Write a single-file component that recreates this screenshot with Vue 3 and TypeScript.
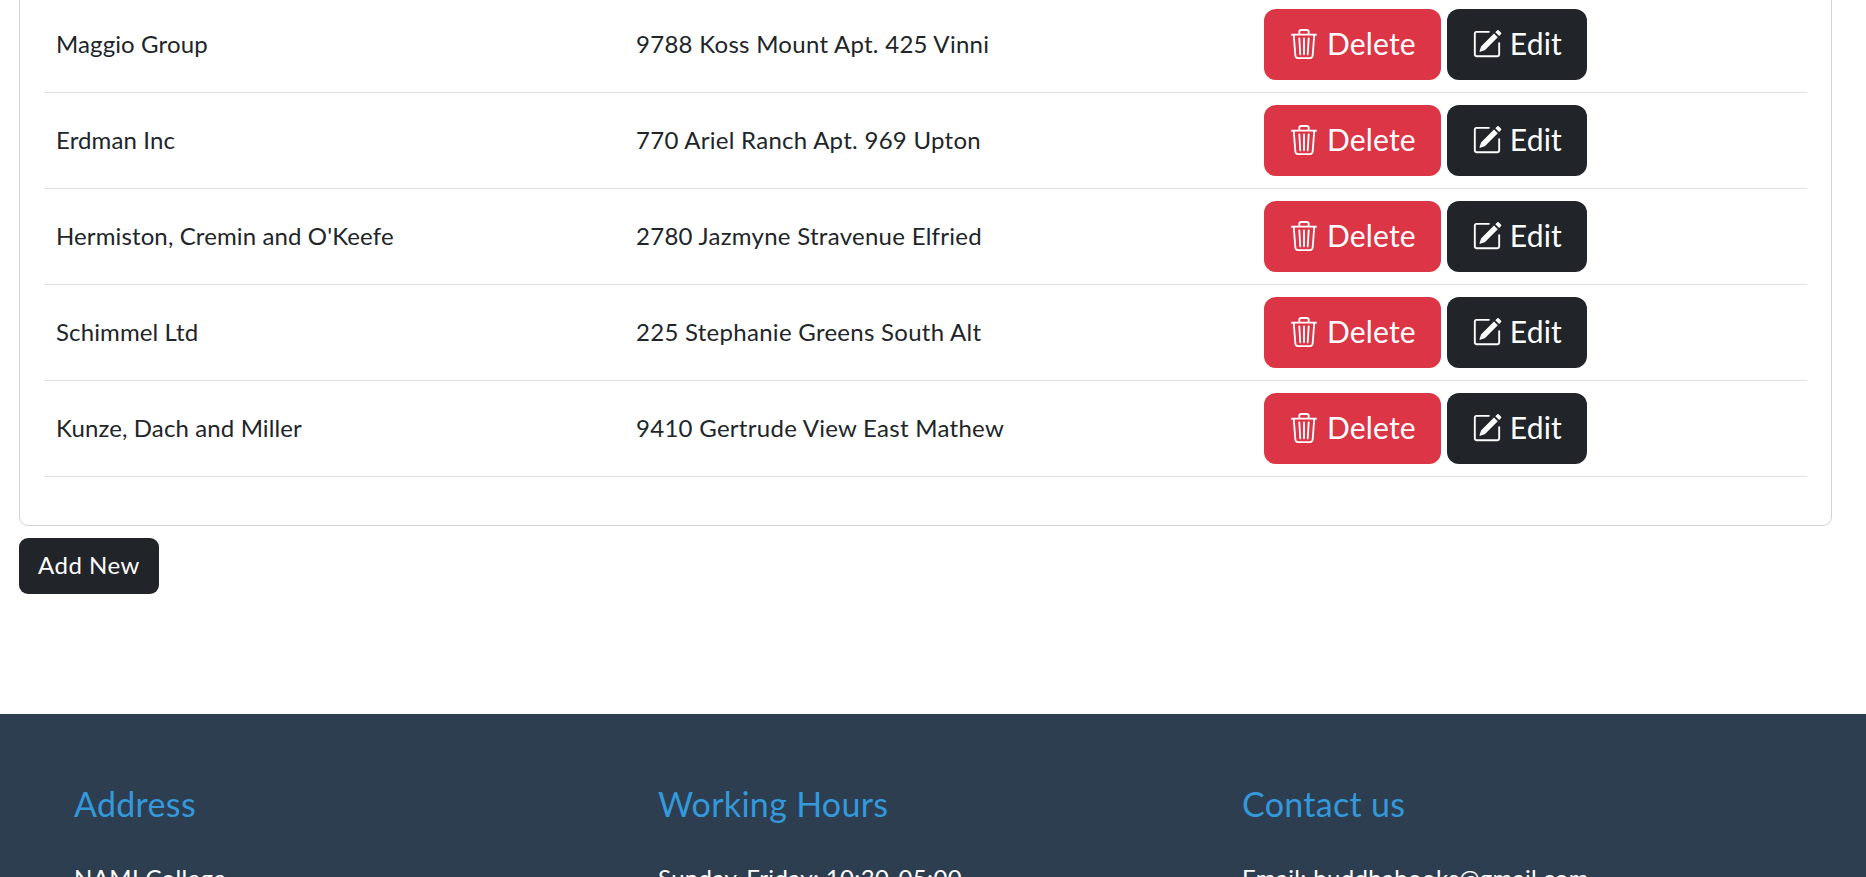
<script setup lang="ts">
interface Publisher {
  name: string
  address: string
}

const publishers: Publisher[] = [
  { name: 'Maggio Group', address: '9788 Koss Mount Apt. 425 Vinni' },
  { name: 'Erdman Inc', address: '770 Ariel Ranch Apt. 969 Upton' },
  { name: 'Hermiston, Cremin and O\'Keefe', address: '2780 Jazmyne Stravenue Elfried' },
  { name: 'Schimmel Ltd', address: '225 Stephanie Greens South Alt' },
  { name: 'Kunze, Dach and Miller', address: '9410 Gertrude View East Mathew' },
]
</script>

<template>
  <div class="page">
    <main class="content">
      <section class="card">
        <table class="table">
          <colgroup>
            <col class="col-name">
            <col class="col-address">
            <col>
          </colgroup>
          <tbody>
            <tr v-for="p in publishers" :key="p.name">
              <td>{{ p.name }}</td>
              <td class="address">{{ p.address }}</td>
              <td class="actions">
                <button class="btn btn-lg btn-danger" type="button">
                  <svg class="icon" viewBox="0 0 16 16" fill="currentColor">
                    <path d="M6.5 1h3a.5.5 0 0 1 .5.5v1H6v-1a.5.5 0 0 1 .5-.5ZM11 2.5v-1A1.5 1.5 0 0 0 9.5 0h-3A1.5 1.5 0 0 0 5 1.5v1H2.506a.58.58 0 0 0-.01 0H1.5a.5.5 0 0 0 0 1h.538l.853 10.66A2 2 0 0 0 4.885 16h6.23a2 2 0 0 0 1.994-1.84l.853-10.66h.538a.5.5 0 0 0 0-1h-.995a.59.59 0 0 0-.01 0H11Zm1.958 1-.846 10.58a1 1 0 0 1-.997.92h-6.23a1 1 0 0 1-.997-.92L3.042 3.5h9.916Zm-7.487 1a.5.5 0 0 1 .528.47l.5 8.5a.5.5 0 0 1-.998.06L5 5.03a.5.5 0 0 1 .47-.53Zm5.058 0a.5.5 0 0 1 .47.53l-.5 8.5a.5.5 0 1 1-.998-.06l.5-8.5a.5.5 0 0 1 .528-.47ZM8 4.5a.5.5 0 0 1 .5.5v8.5a.5.5 0 0 1-1 0V5a.5.5 0 0 1 .5-.5Z" />
                  </svg>
                  Delete
                </button>
                <button class="btn btn-lg btn-dark" type="button">
                  <svg class="icon" viewBox="0 0 16 16" fill="currentColor">
                    <path d="M15.502 1.94a.5.5 0 0 1 0 .706L14.459 3.69l-2-2L13.502.646a.5.5 0 0 1 .707 0l1.293 1.293zm-1.75 2.456-2-2L4.939 9.21a.5.5 0 0 0-.121.196l-.805 2.414a.25.25 0 0 0 .316.316l2.414-.805a.5.5 0 0 0 .196-.12l6.813-6.814z" />
                    <path fill-rule="evenodd" d="M1 13.5A1.5 1.5 0 0 0 2.5 15h11a1.5 1.5 0 0 0 1.5-1.5v-6a.5.5 0 0 0-1 0v6a.5.5 0 0 1-.5.5h-11a.5.5 0 0 1-.5-.5v-11a.5.5 0 0 1 .5-.5H9a.5.5 0 0 0 0-1H2.5A1.5 1.5 0 0 0 1 2.5v11z" />
                  </svg>
                  Edit
                </button>
              </td>
            </tr>
          </tbody>
        </table>
      </section>
      <button class="btn btn-dark btn-add" type="button">Add New</button>
    </main>

    <footer class="footer">
      <div>
        <h4>Address</h4>
        <p>NAMI College</p>
      </div>
      <div>
        <h4>Working Hours</h4>
        <p>Sunday-Friday: 10:30-05:00</p>
      </div>
      <div>
        <h4>Contact us</h4>
        <p>Email: buddhabooks@gmail.com</p>
      </div>
    </footer>
  </div>
</template>

<style>
html, body {
  margin: 0;
  background: #fff;
}
</style>

<style scoped>
.page {
  height: 877px;
  overflow: hidden;
  font-family: Lato, "Noto Sans", sans-serif;
  font-size: 24px;
  line-height: 1.5;
  color: #212529;
}

.content {
  height: 717px;
  margin-top: -3px;
  padding: 0 34px 0 19px;
  box-sizing: border-box;
}

.card {
  padding: 0 24px 48px;
  border: 1px solid #d3d4d5;
  border-top: 0;
  border-radius: 0 0 9px 9px;
  margin-bottom: 12px;
}

.table {
  width: 100%;
  border-collapse: collapse;
  table-layout: fixed;
}

.col-name {
  width: 580px;
}

.col-address {
  width: 628px;
}

td {
  padding: 11px 12px 13px;
  border-bottom: 1px solid #dee2e6;
  vertical-align: middle;
  font-size: 24px;
  letter-spacing: 0.12px;
}

td.address {
  letter-spacing: 0.28px;
}

td.actions {
  padding: 12px;
  white-space: nowrap;
  letter-spacing: 0;
}

.btn {
  display: inline-block;
  padding: 9px 18px;
  border: 1px solid transparent;
  border-radius: 9px;
  font-family: inherit;
  font-size: 24px;
  line-height: 1.5;
  vertical-align: middle;
}

.btn-add {
  padding: 8px 18px 10px;
  letter-spacing: 0.5px;
}

.btn-lg {
  padding: 11px 24px 13px;
  font-size: 30px;
  letter-spacing: 0.2px;
  border-radius: 12px;
}

.btn + .btn {
  margin-left: 6px;
}

.btn-danger {
  background: #dc3545;
  color: #fff;
}

.btn-dark {
  background: #212529;
  color: #fff;
}

.icon {
  display: inline-block;
  width: 30px;
  height: 30px;
  vertical-align: -4px;
}

.footer {
  display: grid;
  grid-template-columns: repeat(3, 584px);
  height: 163px;
  padding: 0 0 0 74px;
  background: #2c3e50;
  color: #fff;
  overflow: hidden;
}

h4 {
  margin: 70px 0 0;
  font-size: 34px;
  font-weight: 400;
  line-height: 1.2;
  letter-spacing: 0.3px;
  color: #3498db;
}

p {
  margin: 35px 0 0;
  font-size: 24px;
  letter-spacing: 0.35px;
}
</style>
